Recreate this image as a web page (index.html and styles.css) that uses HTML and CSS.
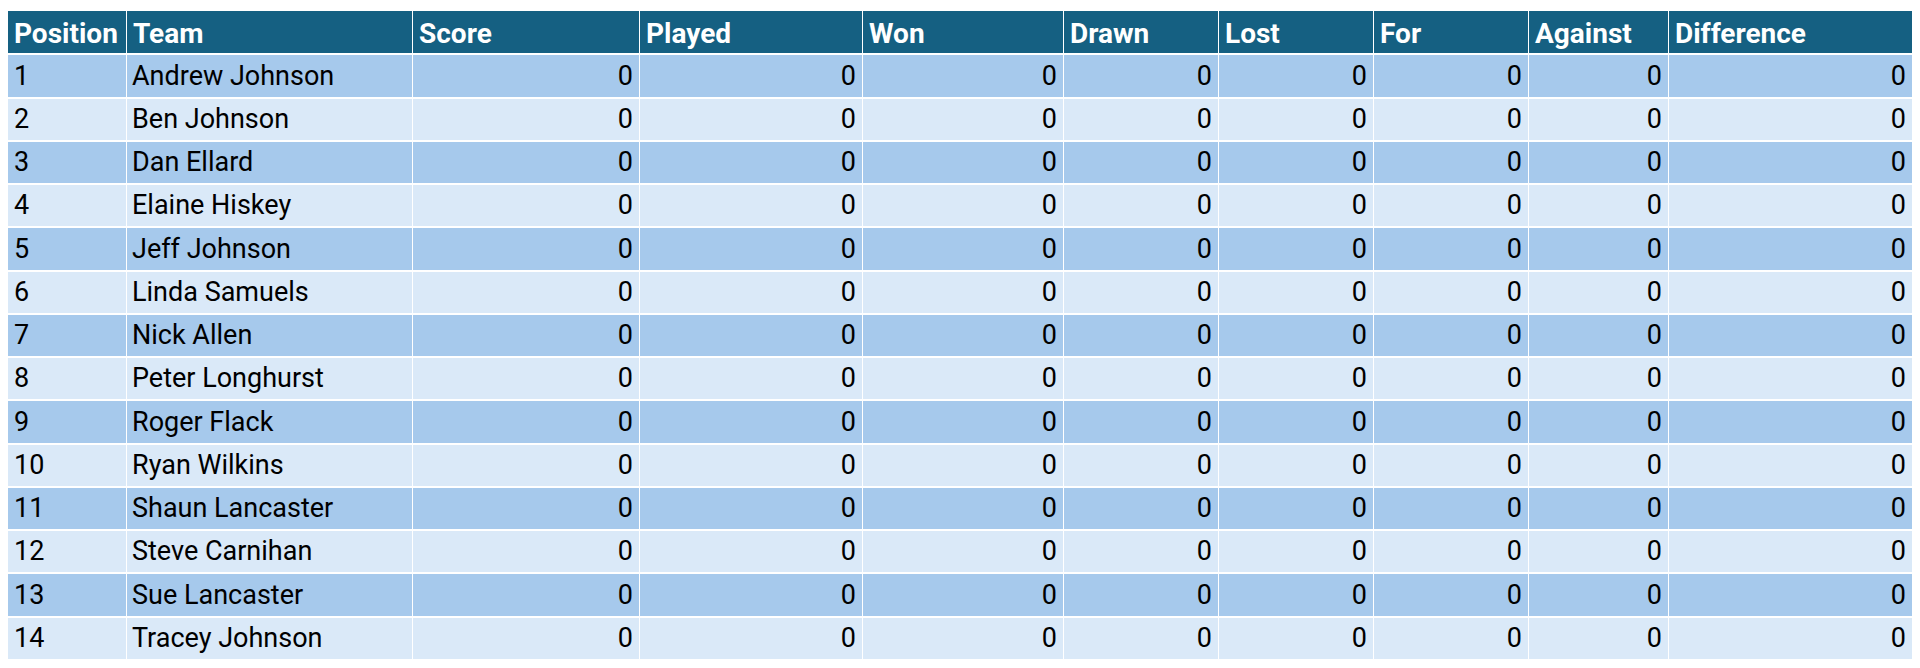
FILE: index.html
```html
<!DOCTYPE html>
<html lang="en">
<head>
<meta charset="utf-8">
<title>League Table</title>
<link rel="stylesheet" href="styles.css">
</head>
<body>
<table class="league">
  <colgroup>
    <col class="c-pos"><col class="c-team"><col class="c-score"><col class="c-played"><col class="c-won"><col class="c-drawn"><col class="c-lost"><col class="c-for"><col class="c-against"><col class="c-diff">
  </colgroup>
  <thead>
    <tr><th>Position</th><th>Team</th><th>Score</th><th>Played</th><th>Won</th><th>Drawn</th><th>Lost</th><th>For</th><th>Against</th><th>Difference</th></tr>
  </thead>
  <tbody>
    <tr><td>1</td><td>Andrew Johnson</td><td class="n">0</td><td class="n">0</td><td class="n">0</td><td class="n">0</td><td class="n">0</td><td class="n">0</td><td class="n">0</td><td class="n">0</td></tr>
    <tr><td>2</td><td>Ben Johnson</td><td class="n">0</td><td class="n">0</td><td class="n">0</td><td class="n">0</td><td class="n">0</td><td class="n">0</td><td class="n">0</td><td class="n">0</td></tr>
    <tr><td>3</td><td>Dan Ellard</td><td class="n">0</td><td class="n">0</td><td class="n">0</td><td class="n">0</td><td class="n">0</td><td class="n">0</td><td class="n">0</td><td class="n">0</td></tr>
    <tr><td>4</td><td>Elaine Hiskey</td><td class="n">0</td><td class="n">0</td><td class="n">0</td><td class="n">0</td><td class="n">0</td><td class="n">0</td><td class="n">0</td><td class="n">0</td></tr>
    <tr><td>5</td><td>Jeff Johnson</td><td class="n">0</td><td class="n">0</td><td class="n">0</td><td class="n">0</td><td class="n">0</td><td class="n">0</td><td class="n">0</td><td class="n">0</td></tr>
    <tr><td>6</td><td>Linda Samuels</td><td class="n">0</td><td class="n">0</td><td class="n">0</td><td class="n">0</td><td class="n">0</td><td class="n">0</td><td class="n">0</td><td class="n">0</td></tr>
    <tr><td>7</td><td>Nick Allen</td><td class="n">0</td><td class="n">0</td><td class="n">0</td><td class="n">0</td><td class="n">0</td><td class="n">0</td><td class="n">0</td><td class="n">0</td></tr>
    <tr><td>8</td><td>Peter Longhurst</td><td class="n">0</td><td class="n">0</td><td class="n">0</td><td class="n">0</td><td class="n">0</td><td class="n">0</td><td class="n">0</td><td class="n">0</td></tr>
    <tr><td>9</td><td>Roger Flack</td><td class="n">0</td><td class="n">0</td><td class="n">0</td><td class="n">0</td><td class="n">0</td><td class="n">0</td><td class="n">0</td><td class="n">0</td></tr>
    <tr><td>10</td><td>Ryan Wilkins</td><td class="n">0</td><td class="n">0</td><td class="n">0</td><td class="n">0</td><td class="n">0</td><td class="n">0</td><td class="n">0</td><td class="n">0</td></tr>
    <tr><td>11</td><td>Shaun Lancaster</td><td class="n">0</td><td class="n">0</td><td class="n">0</td><td class="n">0</td><td class="n">0</td><td class="n">0</td><td class="n">0</td><td class="n">0</td></tr>
    <tr><td>12</td><td>Steve Carnihan</td><td class="n">0</td><td class="n">0</td><td class="n">0</td><td class="n">0</td><td class="n">0</td><td class="n">0</td><td class="n">0</td><td class="n">0</td></tr>
    <tr><td>13</td><td>Sue Lancaster</td><td class="n">0</td><td class="n">0</td><td class="n">0</td><td class="n">0</td><td class="n">0</td><td class="n">0</td><td class="n">0</td><td class="n">0</td></tr>
    <tr><td>14</td><td>Tracey Johnson</td><td class="n">0</td><td class="n">0</td><td class="n">0</td><td class="n">0</td><td class="n">0</td><td class="n">0</td><td class="n">0</td><td class="n">0</td></tr>
  </tbody>
</table>
</body>
</html>
```

FILE: styles.css
```css
html, body {
  margin: 0;
  padding: 0;
  background: #ffffff;
}

.league {
  margin: 9px 0 0 7px;
  border-collapse: separate;
  border-spacing: 1px 2px;
  table-layout: fixed;
  width: 1906px;
  font-family: Roboto, "Liberation Sans", sans-serif;
  font-size: 27px;
  color: #000000;
}

.c-pos { width: 118px; }
.c-team { width: 285px; }
.c-score { width: 226px; }
.c-played { width: 222px; }
.c-won { width: 200px; }
.c-drawn { width: 154px; }
.c-lost { width: 154px; }
.c-for { width: 154px; }
.c-against { width: 139px; }
.c-diff { width: 243px; }

.league tr {
  height: 41px;
}

.league thead tr,
.league tbody tr:nth-child(4n+1) {
  height: 42px;
}

.league th,
.league td {
  padding: 0 4px 0 6px;
  white-space: nowrap;
  overflow: hidden;
  text-align: left;
  vertical-align: middle;
  line-height: 1;
}

.league td:nth-child(2) {
  padding-left: 5px;
}

.league th {
  background: #156082;
  color: #ffffff;
  font-weight: 700;
  font-size: 28px;
  padding-top: 4px;
}

.league td.n {
  text-align: right;
  padding: 0 6px 0 4px;
}

.league tbody tr:nth-child(odd) td {
  background: #a6c9ec;
}

.league tbody tr:nth-child(even) td {
  background: #dae9f8;
}
```
